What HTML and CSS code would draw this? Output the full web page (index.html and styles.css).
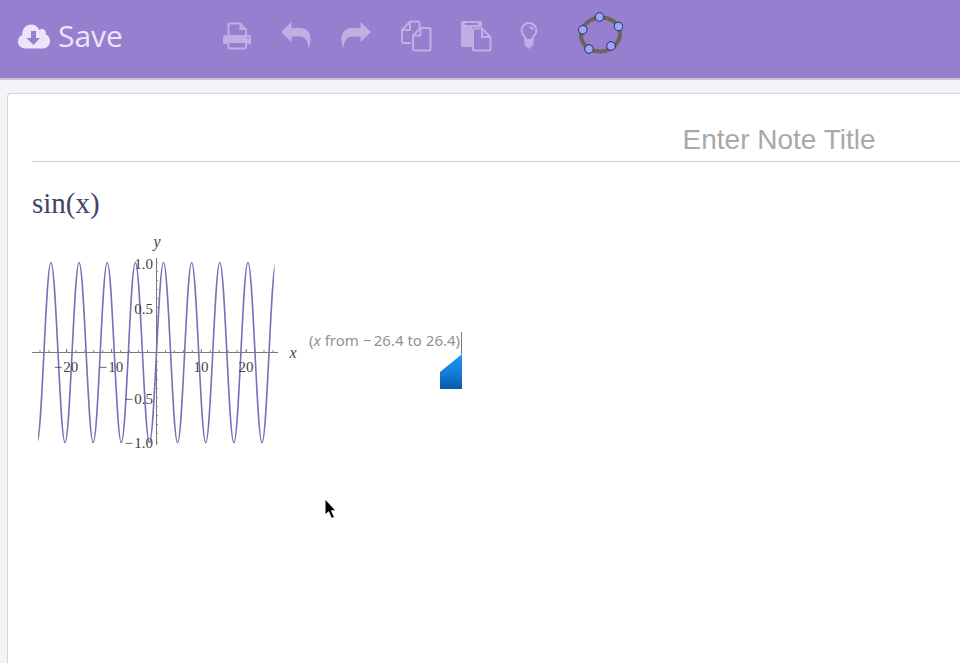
FILE: index.html
```html
<!DOCTYPE html>
<html lang="en">
<head>
<meta charset="utf-8">
<meta name="viewport" content="width=device-width, initial-scale=1">
<title>Note editor</title>
<link rel="stylesheet" href="styles.css">
</head>
<body>
<header class="toolbar">
  <button class="save" type="button">
    <svg width="32" height="25" viewBox="0 0 32 25" aria-hidden="true">
      <path fill="currentColor" fill-rule="evenodd" d="M7.500 24.500C3 24.500 0 21.500 0 17.500c0-3 1.700-5.300 4.300-6.500C3.800 4.700 8 .5 13 .5c4 0 7 2 8.300 5.500 3.400-2.400 7.400.2 6.600 4.600C30.600 11.800 32 14.200 32 17c0 4.300-3 7.500-7.500 7.500zM13 7v7H8.500L15.500 21 22 14h-4V7z"/>
    </svg>
    <span>Save</span>
  </button>
  <button class="tool" type="button" aria-label="Print">
    <svg width="28" height="28" viewBox="0 0 28 28" aria-hidden="true">
      <path class="line" d="M5.500 13V3q0-1.500 1.500-1.500h10l6 6v6M17.500 1v6h6M5.500 20v5q0 1.500 1.500 1.500h14.500Q23 26.500 23 25v-5z"/>
      <path class="solid" fill-rule="evenodd" d="M5 13h18q5-1 5 3v6h-5v-3H5v3H0v-6q0-4 5-3zM24 15h2v1.500h-2z"/>
    </svg>
  </button>
  <button class="tool" type="button" aria-label="Undo">
    <svg width="32" height="28" viewBox="0 0 32 28" aria-hidden="true">
      <path class="solid" d="M0 10 10.500 0v6H19c9 0 13.500 8 8.500 21C27 18 24 14.500 18 14.500h-7.500V20z"/>
    </svg>
  </button>
  <button class="tool" type="button" aria-label="Redo">
    <svg width="32" height="28" viewBox="0 0 32 28" aria-hidden="true">
      <path class="solid" d="M30 10 19.500 0v6H11C2 6-2.500 14 2.500 27 3 18 6 14.500 12 14.500h7.500V20z"/>
    </svg>
  </button>
  <button class="tool" type="button" aria-label="Copy">
    <svg width="32" height="32" viewBox="1 0 32 32" aria-hidden="true">
      <path class="line" d="M11 23H3q-1 0-1-1.500V10L10 1.500h8q1.500 0 1.500 1.500v5M10 1.500V10H2M20.500 8H29q1.500 0 1.500 1.500V29q0 1.500-1.500 1.500H14.500Q13 30.500 13 29V15.500zM20.500 8v7.500H13"/>
    </svg>
  </button>
  <button class="tool" type="button" aria-label="Paste">
    <svg width="32" height="32" viewBox="1 0 32 32" aria-hidden="true">
      <path class="solid" fill-rule="evenodd" d="M3 1h17q2 0 2 2v4H12v20H3q-2 0-2-2V3q0-2 2-2zM5 3v2h13V3z"/>
      <path class="line" d="M14.500 8.500H22l8.500 8.500v12q0 1.500-1.500 1.500H14.500q-1.500 0-1.500-1.500V10q0-1.500 1.500-1.500zM22 8.500V17h8.500"/>
    </svg>
  </button>
  <button class="tool tool-narrow" type="button" aria-label="Hint">
    <svg width="20" height="28" viewBox="1 0 20 28" aria-hidden="true">
      <path class="line" d="M7 18C7 14 2.500 13 2.500 8.500a7.500 7.500 0 0 1 15 0C17.500 13 13 14 13 18M10.500 5q3 .3 3.500 3"/>
      <path class="solid" d="M5.500 17h9v6l-2 1.500-2.500 2.500L7.500 24.500l-2-1.500z"/>
    </svg>
  </button>
  <button class="tool tool-wide" type="button" aria-label="Geometry">
    <svg width="46" height="44" viewBox="-1 1 46 44" aria-hidden="true">
      <ellipse class="ring" cx="22.500" cy="23.500" rx="19.500" ry="17" transform="rotate(-10 22.500 23.500)"/>
      <g class="dots">
        <circle cx="21.500" cy="6" r="4.300"/><circle cx="40.500" cy="15.500" r="4.300"/><circle cx="33" cy="35" r="4.300"/><circle cx="11" cy="38" r="4.300"/><circle cx="4.800" cy="18.800" r="4.300"/>
      </g>
    </svg>
  </button>
</header>
<main class="workspace">
  <article class="note">
    <input class="note-title" type="text" placeholder="Enter Note Title" aria-label="Note title">
    <p class="formula">sin(x)</p>
    <div class="result">
      <svg class="plot" width="268" height="236" viewBox="32 226 268 236" role="img" aria-label="Plot of sin(x)">
        <defs>
          <clipPath id="domain"><path d="M38 250h236.500v204H38z"/></clipPath>
          <pattern id="xticks" x="156" y="350" width="8.960" height="3" patternUnits="userSpaceOnUse"><path d="M0 0h1v3H0z" fill="#888"/></pattern>
          <pattern id="yticks" x="156" y="352" width="2" height="9" patternUnits="userSpaceOnUse"><path d="M0 0h2v1H0z" fill="#888"/></pattern>
        </defs>
        <path class="axis" d="M32 352.500h246M156.500 258v187M66.500 349v3M111.500 349v3M201.500 349v3M246.500 349v3"/>
        <path fill="url(#xticks)" d="M38 350h238v3H38z"/>
        <path fill="url(#yticks)" d="M156 260h2v184h-2z"/>
        <path class="curve" clip-path="url(#domain)" d="M36.890 442.500c5.120 0 8.950-180 14.070-180s8.950 180 14.070 180 8.950-180 14.070-180 8.950 180 14.070 180 8.950-180 14.070-180 8.950 180 14.070 180 8.950-180 14.070-180 8.950 180 14.070 180 8.950-180 14.070-180 8.950 180 14.070 180 8.950-180 14.070-180 8.950 180 14.070 180 8.950-180 14.070-180 8.950 180 14.070 180 8.950-180 14.070-180 8.950 180 14.070 180 8.950-180 14.070-180"/>
        <g class="labels">
          <text x="66" y="372">−&#8202;20</text><text x="111" y="372">−&#8202;10</text>
          <text x="201" y="372">10</text><text x="246" y="372">20</text>
          <g class="side"><text x="153" y="269">1.0</text><text x="153" y="314">0.5</text><text x="153" y="404">−&#8202;0.5</text><text x="153" y="448">−&#8202;1.0</text></g>
          <text class="name" x="157" y="247">y</text><text class="name" x="293" y="358">x</text>
        </g>
      </svg>
      <p class="range">(<i>x</i> from −&#8201;26.4 to 26.4)<svg class="handle" width="22" height="35" viewBox="0 0 22 35" aria-hidden="true">
        <defs><linearGradient id="blue" x2="0" y2="1"><stop stop-color="#2494f8"/><stop offset=".5" stop-color="#167fda"/><stop offset="1" stop-color="#085ba9"/></linearGradient></defs>
        <path fill="url(#blue)" d="M22 0v35H0V18z"/>
      </svg></p>
    </div>
  </article>
</main>
<svg class="pointer" width="14" height="23" viewBox="0 0 14 23" aria-hidden="true">
  <path d="M1 1v16l3.600-3.200L7.500 20.500l3-1.300-3-6.400H12z" fill="#000" stroke="#fff"/>
</svg>
</body>
</html>
```
FILE: styles.css
```css
* { box-sizing: border-box; }

body {
  margin: 0;
  min-height: 100vh;
  display: flex;
  flex-direction: column;
  background: #f4f3f7;
  font-family: "Noto Sans", "Open Sans", sans-serif;
}

.toolbar {
  display: flex;
  align-items: center;
  height: 80px;
  padding: 0 18px 6px;
  background: #967fce;
  border-bottom: 2px solid #c8c6cc;
}

button {
  display: flex;
  align-items: center;
  flex: none;
  padding: 0;
  border: 0;
  background: none;
  color: #ece4fb;
}

.save {
  gap: 8px;
  width: 189px;
  font: 30px/40px "Open Sans", sans-serif;
}

.tool {
  justify-content: center;
  width: 60px;
  height: 60px;
  color: #c0afe5;
}

.tool-narrow { width: 45px; }
.tool-wide { width: 96px; padding-bottom: 4px; }

.line { fill: none; stroke: currentColor; stroke-width: 2; }
.solid { fill: currentColor; }
.ring { fill: none; stroke: #68655f; stroke-width: 4; }
.dots { fill: #99a5ff; stroke: #2e2c50; stroke-width: 1; }

.workspace {
  flex: 1;
  display: flex;
  padding: 13px 0 0 7px;
}

.note {
  flex: 1;
  min-width: 0;
  padding: 24px 0 0 24px;
  background: #fff;
  border: 1px solid #d4d3d8;
  border-width: 1px 0 0 1px;
  border-radius: 4px 0 0 0;
}

.note-title {
  display: block;
  width: 100%;
  height: 44px;
  padding: 0 0 0 61%;
  border: 0;
  border-bottom: 1px solid #ccc;
  background: none;
  text-align: center;
  font: 28px/40px "Liberation Sans", sans-serif;
}

.note-title::placeholder { color: #a9a9a9; opacity: 1; }

.formula {
  margin: 23px 0 0;
  color: #444468;
  font: 29px/36px "Liberation Serif", serif;
}

.result {
  display: flex;
  align-items: center;
  gap: 9px;
  margin-top: 5px;
}

.plot { display: block; flex: none; }
.axis { fill: none; stroke: #777; }
.curve { fill: none; stroke: #7472b8; stroke-width: 1.6; }
.labels { fill: #444; font: 15px "Liberation Serif", serif; text-anchor: middle; }
.side { text-anchor: end; }
.name { font-style: italic; font-size: 16px; }

.range {
  position: relative;
  margin: 0 0 2px;
  padding: 0 1px 6px 0;
  border-right: 1px solid #777;
  color: #929292;
  font-size: 15px;
  line-height: 16px;
  white-space: nowrap;
}

.handle {
  position: absolute;
  top: 100%;
  right: -1px;
}

.pointer {
  position: absolute;
  left: 324px;
  top: 498px;
}
```
